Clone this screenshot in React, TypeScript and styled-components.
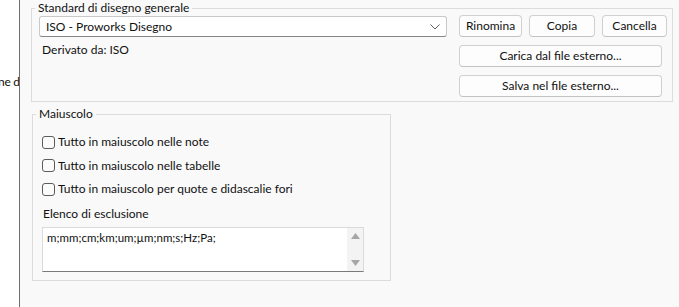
import React from "react";
import styled, { createGlobalStyle } from "styled-components";

const Global = createGlobalStyle`
  html, body { margin: 0; padding: 0; background: #f9f9f9; }
  body { font-family: Lato, "Noto Sans", sans-serif; font-size: 12px; color: #111111; }
  * { box-sizing: border-box; }
`;

const Page = styled.div`
  display: flex;
  width: 679px;
  height: 307px;
  overflow: hidden;
  background: #f9f9f9;
`;

const SidePanel = styled.div`
  width: 20px;
  flex: none;
  background: #ffffff;
  border-right: 1px solid #6e6e6e;
  overflow: hidden;
  display: flex;
  flex-direction: column;
  padding-top: 74px;
`;

const SideText = styled.span`
  white-space: nowrap;
  line-height: 16px;
  margin-left: -2px;
  letter-spacing: -0.3px;
`;

const Main = styled.div`
  flex: 1;
  display: flex;
  flex-direction: column;
  align-items: flex-start;
  padding: 0 7px 0 11px;
  gap: 4px;
`;

const Group = styled.fieldset<{ $width: number; $height: number; $inset?: number }>`
  margin: 0 0 0 ${(p) => p.$inset ?? 0}px;
  width: ${(p) => p.$width}px;
  height: ${(p) => p.$height}px;
  border: 1px solid #dcdcdc;
  border-radius: 0;
  padding: 0 5px 0 7px;
  min-width: 0;
`;

const Legend = styled.legend`
  padding: 0 3px;
  margin-left: -4px;
  line-height: 16px;
`;

const TopGrid = styled.div`
  display: grid;
  grid-template-columns: 408px 1fr;
  column-gap: 12px;
  align-items: start;
`;

const LeftCol = styled.div`
  display: flex;
  flex-direction: column;
`;

const Combo = styled.div`
  height: 21px;
  background: #ffffff;
  border: 1px solid #c9c9c9;
  border-bottom-color: #868686;
  border-radius: 3px;
  display: flex;
  align-items: center;
  justify-content: space-between;
  padding: 0 6px 0 6px;
  line-height: 16px;
`;

const Derived = styled.div`
  margin-top: 5px;
  padding-left: 3px;
  line-height: 16px;
`;

const RightCol = styled.div`
  display: flex;
  flex-direction: column;
  gap: 8px;
  margin-top: -1px;
`;

const ButtonRow = styled.div`
  display: flex;
  gap: 7px;
`;

const Button = styled.button<{ $width: number }>`
  width: ${(p) => p.$width}px;
  height: 22px;
  padding: 0;
  background: #fdfdfd;
  border: 1px solid #d0d0d0;
  border-bottom-color: #c2c2c2;
  border-radius: 4px;
  font-family: inherit;
  font-size: 12px;
  color: #111111;
  line-height: 16px;
`;

const CheckList = styled.div`
  display: flex;
  flex-direction: column;
  gap: 7.5px;
  padding-top: 12px;
`;

const CheckRow = styled.label`
  display: flex;
  align-items: center;
  gap: 3px;
  line-height: 16px;
  padding-left: 2px;
`;

const Box = styled.span`
  width: 13px;
  height: 13px;
  border: 1px solid #5c5c5c;
  border-radius: 3px;
  background: #fbfbfb;
  flex: none;
`;

const FieldLabel = styled.div`
  margin-top: 9px;
  padding-left: 3px;
  line-height: 16px;
`;

const TextBox = styled.div`
  margin: 5px 0 0 2px;
  width: 322px;
  height: 45px;
  background: #ffffff;
  border: 1px solid #dadada;
  border-bottom-color: #7a7a7a;
  display: flex;
`;

const TextContent = styled.div`
  flex: 1;
  padding: 3px 4px;
  font-size: 11.5px;
  line-height: 14px;
`;

const ScrollTrack = styled.div`
  width: 16px;
  background: #f3f3f3;
  display: flex;
  flex-direction: column;
  justify-content: space-between;
  align-items: center;
  padding: 5px 0 5px;
`;

const Chevron = () => (
  <svg width="10" height="6" viewBox="0 0 10 6">
    <path d="M0.5 0.5 L5 5 L9.5 0.5" fill="none" stroke="#5f5f5f" strokeWidth="1" />
  </svg>
);

const Arrow = ({ up }: { up?: boolean }) => (
  <svg width="9" height="6" viewBox="0 0 9 6">
    {up ? <path d="M0 6 L4.5 0 L9 6 Z" fill="#a6a6a6" /> : <path d="M0 0 L4.5 6 L9 0 Z" fill="#a6a6a6" />}
  </svg>
);

const checks = [
  "Tutto in maiuscolo nelle note",
  "Tutto in maiuscolo nelle tabelle",
  "Tutto in maiuscolo per quote e didascalie fori",
];

export default function App() {
  return (
    <Page>
      <Global />
      <SidePanel>
        <SideText>ne di</SideText>
      </SidePanel>
      <Main>
        <Group $width={642} $height={102}>
          <Legend>Standard di disegno generale</Legend>
          <TopGrid>
            <LeftCol>
              <Combo>
                <span>ISO - Proworks Disegno</span>
                <Chevron />
              </Combo>
              <Derived>Derivato da: ISO</Derived>
            </LeftCol>
            <RightCol>
              <ButtonRow>
                <Button $width={63}>Rinomina</Button>
                <Button $width={66}>Copia</Button>
                <Button $width={65}>Cancella</Button>
              </ButtonRow>
              <Button $width={203}>Carica dal file esterno...</Button>
              <Button $width={203}>Salva nel file esterno...</Button>
            </RightCol>
          </TopGrid>
        </Group>
        <Group $width={359} $height={175} $inset={1}>
          <Legend>Maiuscolo</Legend>
          <CheckList>
            {checks.map((c) => (
              <CheckRow key={c}>
                <Box />
                {c}
              </CheckRow>
            ))}
          </CheckList>
          <FieldLabel>Elenco di esclusione</FieldLabel>
          <TextBox>
            <TextContent>m;mm;cm;km;um;µm;nm;s;Hz;Pa;</TextContent>
            <ScrollTrack>
              <Arrow up />
              <Arrow />
            </ScrollTrack>
          </TextBox>
        </Group>
      </Main>
    </Page>
  );
}
